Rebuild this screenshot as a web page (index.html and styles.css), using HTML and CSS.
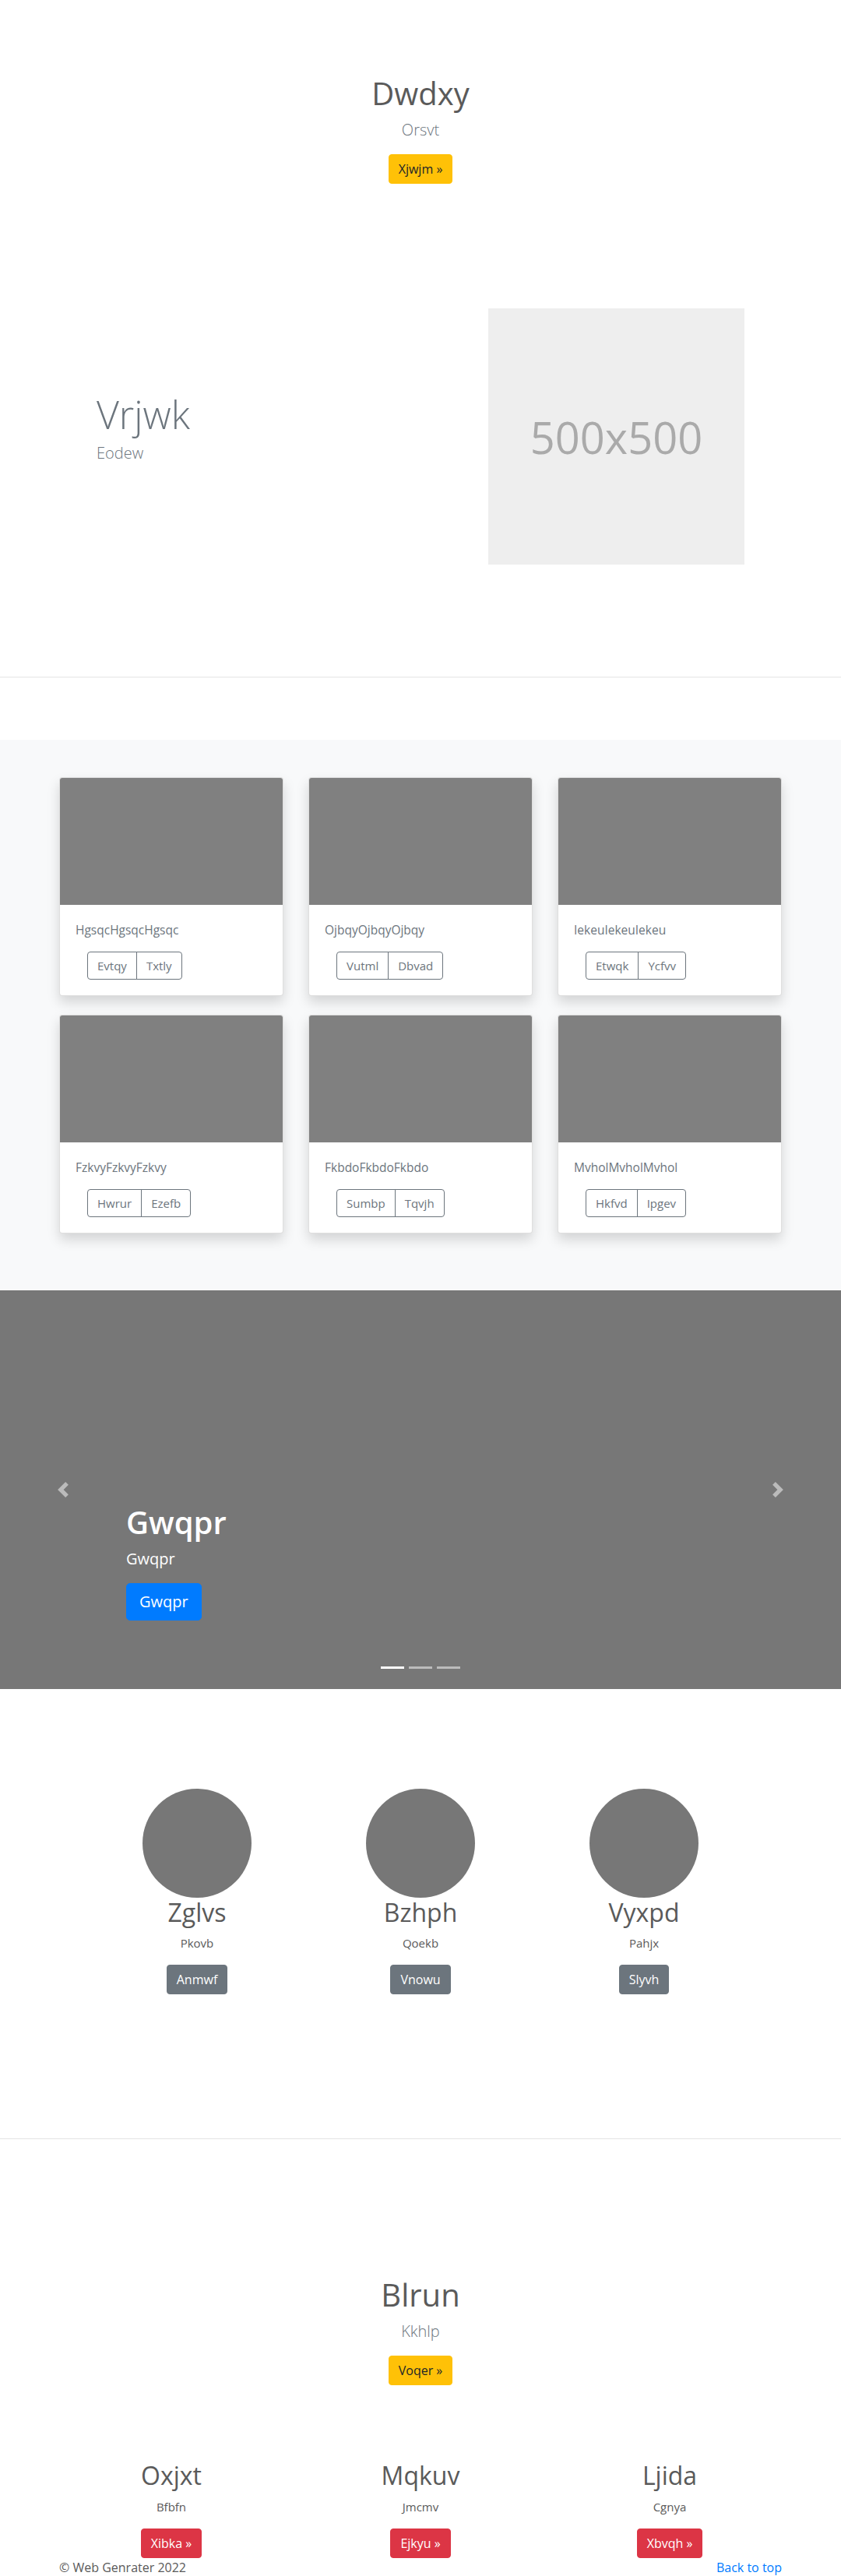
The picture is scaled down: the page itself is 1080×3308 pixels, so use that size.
FILE: index.html
```html
<!DOCTYPE html>
<html lang="en">
<head>
<meta charset="utf-8">
<title>Web Genrater</title>
<link rel="stylesheet" href="styles.css">
</head>
<body>
<main>
  <section class="hero hero-top">
    <h1 class="hero-title">Dwdxy</h1>
    <p class="lead">Orsvt</p>
    <a class="btn btn-warning" href="#">Xjwjm &raquo;</a>
  </section>

  <section class="feature">
    <div class="feature-text">
      <h2 class="display">Vrjwk</h2>
      <p class="lead feature-lead">Eodew</p>
    </div>
    <div class="placeholder">500x500</div>
  </section>

  <hr class="divider divider-one">

  <section class="album">
    <div class="album-grid">
      <div class="card">
        <div class="card-img"></div>
        <div class="card-body">
          <p class="card-text">HgsqcHgsqcHgsqc</p>
          <div class="btn-group"><a class="btn-outline" href="#">Evtqy</a><a class="btn-outline" href="#">Txtly</a></div>
        </div>
      </div>
      <div class="card">
        <div class="card-img"></div>
        <div class="card-body">
          <p class="card-text">OjbqyOjbqyOjbqy</p>
          <div class="btn-group"><a class="btn-outline" href="#">Vutml</a><a class="btn-outline" href="#">Dbvad</a></div>
        </div>
      </div>
      <div class="card">
        <div class="card-img"></div>
        <div class="card-body">
          <p class="card-text">IekeuIekeuIekeu</p>
          <div class="btn-group"><a class="btn-outline" href="#">Etwqk</a><a class="btn-outline" href="#">Ycfvv</a></div>
        </div>
      </div>
      <div class="card">
        <div class="card-img"></div>
        <div class="card-body">
          <p class="card-text">FzkvyFzkvyFzkvy</p>
          <div class="btn-group"><a class="btn-outline" href="#">Hwrur</a><a class="btn-outline" href="#">Ezefb</a></div>
        </div>
      </div>
      <div class="card">
        <div class="card-img"></div>
        <div class="card-body">
          <p class="card-text">FkbdoFkbdoFkbdo</p>
          <div class="btn-group"><a class="btn-outline" href="#">Sumbp</a><a class="btn-outline" href="#">Tqvjh</a></div>
        </div>
      </div>
      <div class="card">
        <div class="card-img"></div>
        <div class="card-body">
          <p class="card-text">MvholMvholMvhol</p>
          <div class="btn-group"><a class="btn-outline" href="#">Hkfvd</a><a class="btn-outline" href="#">Ipgev</a></div>
        </div>
      </div>
    </div>
  </section>

  <section class="carousel">
    <div class="caption">
      <h1 class="caption-title">Gwqpr</h1>
      <p class="caption-text">Gwqpr</p>
      <a class="btn btn-primary-lg" href="#">Gwqpr</a>
    </div>
    <a class="control control-prev" href="#">
      <svg width="20" height="20" viewBox="0 0 8 8"><path fill="#fff" d="M5.25 0l-4 4 4 4 1.5-1.5-2.5-2.5 2.5-2.5-1.5-1.5z"/></svg>
    </a>
    <a class="control control-next" href="#">
      <svg width="20" height="20" viewBox="0 0 8 8"><path fill="#fff" d="M2.75 0l-1.5 1.5 2.5 2.5-2.5 2.5 1.5 1.5 4-4-4-4z"/></svg>
    </a>
    <ol class="indicators">
      <li class="active"></li>
      <li></li>
      <li></li>
    </ol>
  </section>

  <section class="marketing">
    <div class="person">
      <div class="circle"></div>
      <h2 class="person-name">Zglvs</h2>
      <p class="person-text">Pkovb</p>
      <a class="btn btn-secondary" href="#">Anmwf</a>
    </div>
    <div class="person">
      <div class="circle"></div>
      <h2 class="person-name">Bzhph</h2>
      <p class="person-text">Qoekb</p>
      <a class="btn btn-secondary" href="#">Vnowu</a>
    </div>
    <div class="person">
      <div class="circle"></div>
      <h2 class="person-name">Vyxpd</h2>
      <p class="person-text">Pahjx</p>
      <a class="btn btn-secondary" href="#">Slyvh</a>
    </div>
  </section>

  <hr class="divider divider-two">

  <section class="hero hero-bottom">
    <h1 class="hero-title">Blrun</h1>
    <p class="lead">Kkhlp</p>
    <a class="btn btn-warning" href="#">Voqer &raquo;</a>
  </section>

  <section class="columns">
    <div class="column">
      <h2 class="column-title">Oxjxt</h2>
      <p class="column-text">Bfbfn</p>
      <a class="btn btn-danger" href="#">Xibka &raquo;</a>
    </div>
    <div class="column">
      <h2 class="column-title">Mqkuv</h2>
      <p class="column-text">Jmcmv</p>
      <a class="btn btn-danger" href="#">Ejkyu &raquo;</a>
    </div>
    <div class="column">
      <h2 class="column-title">Ljida</h2>
      <p class="column-text">Cgnya</p>
      <a class="btn btn-danger" href="#">Xbvqh &raquo;</a>
    </div>
  </section>

  <footer class="footer">
    <p class="copyright">&copy; Web Genrater 2022</p>
    <a class="back-top" href="#">Back to top</a>
  </footer>
</main>
</body>
</html>
```

FILE: styles.css
```css
* {
  box-sizing: border-box;
}

html, body {
  margin: 0;
  padding: 0;
}

body {
  font-family: "Open Sans", "Noto Sans", "Liberation Sans", sans-serif;
  font-size: 16px;
  line-height: 1.5;
  color: #5a5a5a;
  background: #fff;
}

h1, h2, p {
  margin: 0;
}

a {
  text-decoration: none;
}

/* Buttons */
.btn {
  display: inline-block;
  font-size: 16px;
  line-height: 24px;
  font-weight: 400;
  padding: 6px 12px;
  border: 1px solid transparent;
  border-radius: 4px;
  text-align: center;
}

.btn-warning {
  background: #ffc107;
  border-color: #ffc107;
  color: #212529;
}

.btn-secondary {
  background: #6c757d;
  border-color: #6c757d;
  color: #fff;
}

.btn-danger {
  background: #dc3545;
  border-color: #dc3545;
  color: #fff;
}

.btn-primary-lg {
  background: #007bff;
  border-color: #007bff;
  color: #fff;
  font-size: 20px;
  line-height: 30px;
  padding: 8px 16px;
  border-radius: 5px;
}

/* Hero */
.hero {
  display: flex;
  flex-direction: column;
  align-items: center;
  text-align: center;
}

.hero-top {
  padding-top: 96px;
}

.hero-title {
  font-size: 40px;
  line-height: 48px;
  font-weight: 500;
  color: #5a5a5a;
  margin-bottom: 8px;
}

.lead {
  font-size: 20px;
  line-height: 30px;
  font-weight: 300;
  color: #6c757d;
  margin-bottom: 16px;
}

/* Feature */
.feature {
  display: grid;
  grid-template-columns: 503px 329px;
  align-items: center;
  padding-left: 124px;
  margin-top: 160px;
}

.display {
  font-size: 50px;
  line-height: 60px;
  font-weight: 300;
  color: #6c757d;
  margin-bottom: 5px;
}

.feature-lead {
  margin-bottom: 22px;
}

.placeholder {
  width: 329px;
  height: 329px;
  background: #eeeeee;
  color: #aaaaaa;
  font-size: 56px;
  line-height: 1;
  display: flex;
  align-items: center;
  justify-content: center;
}

/* Dividers */
.divider {
  border: 0;
  border-top: 1px solid #e5e5e5;
  height: 0;
  margin: 0;
}

.divider-one {
  margin-top: 144px;
}

.divider-two {
  margin-top: 185px;
}

/* Album */
.album {
  margin-top: 80px;
  background: #f8f9fa;
  padding: 48px 0 49px;
}

.album-grid {
  width: 928px;
  margin: 0 auto;
  display: grid;
  grid-template-columns: repeat(3, 288px);
  column-gap: 32px;
}

.card {
  background: #fff;
  border: 1px solid rgba(0, 0, 0, 0.125);
  border-radius: 4px;
  overflow: hidden;
  box-shadow: 0 8px 16px rgba(0, 0, 0, 0.15);
  margin-bottom: 24px;
}

.card-img {
  height: 163px;
  background: #808080;
}

.card-body {
  padding: 20px;
}

.card-text {
  font-size: 15.5px;
  line-height: 24px;
  color: #6c757d;
  margin-bottom: 16px;
}

.btn-group {
  display: inline-flex;
  margin-left: 15px;
}

.btn-outline {
  display: inline-block;
  font-size: 15px;
  line-height: 24px;
  padding: 5px 12px;
  border: 1px solid #6c757d;
  color: #6c757d;
  background: transparent;
}

.btn-outline:first-child {
  border-radius: 4px 0 0 4px;
}

.btn-outline:last-child {
  border-radius: 0 4px 4px 0;
  margin-left: -1px;
}

/* Carousel */
.carousel {
  position: relative;
  height: 512px;
  background: #777777;
  display: flex;
  flex-direction: column;
  justify-content: flex-end;
  padding: 0 162px 88px;
}

.caption {
  display: flex;
  flex-direction: column;
  align-items: flex-start;
  color: #fff;
}

.caption-title {
  font-size: 40px;
  line-height: 48px;
  font-weight: 600;
  margin-bottom: 8px;
}

.caption-text {
  font-size: 20px;
  line-height: 30px;
  margin-bottom: 16px;
}

.control {
  position: absolute;
  top: 0;
  bottom: 0;
  width: 15%;
  display: flex;
  align-items: center;
  justify-content: center;
  opacity: 0.5;
}

.control-prev {
  left: 0;
}

.control-next {
  right: 0;
}

.indicators {
  position: absolute;
  left: 0;
  right: 0;
  bottom: 26px;
  margin: 0;
  padding: 0;
  list-style: none;
  display: flex;
  justify-content: center;
  gap: 6px;
}

.indicators li {
  width: 30px;
  height: 3px;
  background: rgba(255, 255, 255, 0.5);
}

.indicators li.active {
  background: #fff;
}

/* Marketing */
.marketing {
  margin: 128px auto 0;
  width: 861px;
  display: grid;
  grid-template-columns: repeat(3, 287px);
}

.person {
  display: flex;
  flex-direction: column;
  align-items: center;
  text-align: center;
}

.circle {
  width: 140px;
  height: 140px;
  border-radius: 50%;
  background: #777777;
}

.person-name {
  font-size: 32px;
  line-height: 1.2;
  font-weight: 400;
  margin-bottom: 8px;
}

.person-text {
  font-size: 15px;
  line-height: 24px;
  margin-bottom: 16px;
}

/* Bottom hero */
.hero-bottom {
  padding-top: 176px;
}

/* Columns */
.columns {
  margin: 97px auto 0;
  width: 960px;
  display: grid;
  grid-template-columns: repeat(3, 320px);
}

.column {
  display: flex;
  flex-direction: column;
  align-items: center;
  text-align: center;
}

.column-title {
  font-size: 32px;
  line-height: 1.2;
  font-weight: 500;
  margin-bottom: 8px;
}

.column-text {
  font-size: 15px;
  line-height: 24px;
  margin-bottom: 16px;
}

/* Footer */
.footer {
  display: flex;
  justify-content: space-between;
  padding: 0 76px;
  font-size: 16px;
  line-height: 24px;
}

.back-top {
  color: #007bff;
}
```
